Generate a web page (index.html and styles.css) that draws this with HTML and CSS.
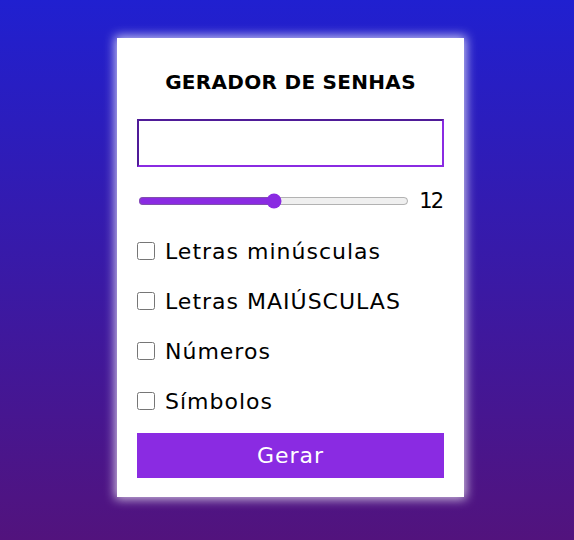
FILE: index.html
```html
<!DOCTYPE html>
<html lang="pt-BR">
<head>
<meta charset="utf-8">
<title>Gerador de Senhas</title>
<link rel="stylesheet" href="styles.css">
</head>
<body>
<main class="card">
  <h1 class="title">GERADOR DE SENHAS</h1>
  <input class="output" type="text" readonly>
  <div class="length-row">
    <input class="range" type="range" min="4" max="20" value="12">
    <span class="length-value">12</span>
  </div>
  <label class="option"><input type="checkbox" class="check"><span>Letras minúsculas</span></label>
  <label class="option"><input type="checkbox" class="check"><span>Letras MAIÚSCULAS</span></label>
  <label class="option"><input type="checkbox" class="check"><span>Números</span></label>
  <label class="option"><input type="checkbox" class="check"><span>Símbolos</span></label>
  <button class="generate" type="button">Gerar</button>
</main>
</body>
</html>
```
FILE: styles.css
```css
* { box-sizing: border-box; }
html, body { margin: 0; height: 100%; }
body {
  background: linear-gradient(to bottom, #2020d0 0%, #52137d 100%);
  font-family: "DejaVu Sans", "Open Sans", sans-serif;
  color: #000;
  padding-top: 38px;
  overflow: hidden;
}
.card {
  width: 347px;
  margin-left: 117px;
  background: #fff;
  padding: 20px 20px 19px;
  display: flex;
  flex-direction: column;
  box-shadow: 0 0 10px 2px rgba(255,255,255,0.75);
}
.title {
  margin: 0;
  height: 48px;
  line-height: 48px;
  font-size: 20px;
  font-weight: 700;
  letter-spacing: 0.3px;
  text-align: center;
  white-space: nowrap;
}
.output {
  margin-top: 13px;
  height: 48px;
  width: 100%;
  border: 2px solid #8a2be2;
  border-top-color: #4f1b98;
  border-left-color: #4f1b98;
  outline: none;
  font-size: 18px;
  padding: 0 10px;
}
.length-row {
  margin-top: 9px;
  height: 50px;
  display: flex;
  align-items: center;
  gap: 10px;
}
.range {
  flex: 1;
  margin: 0 0 0 1px;
  accent-color: #8a2be2;
}
.length-value {
  font-size: 21px;
  letter-spacing: -2px;
  line-height: 1;
  padding-right: 2px;
}
.option {
  height: 50px;
  display: flex;
  align-items: center;
  gap: 10px;
  font-size: 22px;
  letter-spacing: 1px;
}
.check {
  width: 18px;
  height: 18px;
  margin: 0;
}
.generate {
  margin-top: 7px;
  height: 45px;
  border: none;
  background: #8a2be2;
  color: #fff;
  font-family: inherit;
  font-size: 22px;
  letter-spacing: 1px;
  cursor: pointer;
}
```
